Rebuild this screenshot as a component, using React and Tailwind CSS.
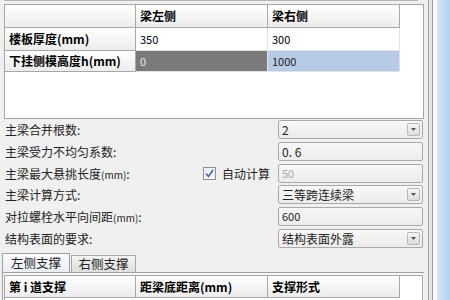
import React from 'react'

const font = { fontFamily: '"Noto Sans CJK SC", "DejaVu Sans", sans-serif' }

function HeadCell({ children, className = '' }) {
  return (
    <div
      className={`flex items-center px-[4px] font-bold text-[12px] text-black bg-gradient-to-b from-[#ffffff] to-[#ececec] border-r border-b border-[#a8a8a8] ${className}`}
    >
      {children}
    </div>
  )
}

function Cell({ children, className = '' }) {
  return (
    <div className={`flex items-center px-[4px] text-[11px] border-r border-b border-[#e2e2e2] ${className}`}>
      {children}
    </div>
  )
}

function Arrow() {
  return (
    <div className="w-[13px] h-[13px] mr-[2px] border border-[#b8b8b8] rounded-[2px] bg-gradient-to-b from-[#f6f6f6] to-[#dcdcdc] flex items-center justify-center">
      <svg width="5" height="3" viewBox="0 0 5 3">
        <path d="M0 0h5L2.5 3z" fill="#555" />
      </svg>
    </div>
  )
}

function Field({ value, combo, disabled, big }) {
  return (
    <div className="shrink-0 w-[145px] h-[19px] mr-[1px] border border-[#a9a9a9] rounded-[2px] bg-gradient-to-b from-[#f7f7f7] to-[#ececec] flex items-center justify-between">
      <span
        className={`pl-[3px] ${big ? 'text-[12px]' : 'text-[11px]'} ${disabled ? 'text-[#a8a8a8]' : 'text-[#222]'}`}
      >
        {value}
      </span>
      {combo && <Arrow />}
    </div>
  )
}

function Row({ label, children, className = '' }) {
  return (
    <div className={`shrink-0 flex items-center h-[19px] ${className}`}>
      <div className="flex-1 pl-[5px] text-[12px] text-[#222] whitespace-nowrap">{label}</div>
      {children}
    </div>
  )
}

const mm = <span className="text-[10px]">(mm)</span>

export default function App() {
  return (
    <div className="w-[450px] h-[300px] bg-[#f0f0f0] flex overflow-hidden" style={font}>
      <div className="w-[424px] flex flex-col">
        {/* top remnant */}
        <div className="shrink-0 h-[4px] flex">
          <div className="ml-[4px] w-[414px] h-[1px] bg-[#b5b5b5]" />
        </div>

        {/* upper grid */}
        <div className="shrink-0 ml-[4px] w-[420px] h-[115px] border border-[#a6a6a6] bg-white">
          <div className="grid grid-cols-[131px_132px_132px] grid-rows-[23px_23px_21px]">
            <HeadCell />
            <HeadCell>梁左侧</HeadCell>
            <HeadCell>梁右侧</HeadCell>
            <HeadCell>楼板厚度(mm)</HeadCell>
            <Cell>350</Cell>
            <Cell>300</Cell>
            <HeadCell>下挂侧模高度h(mm)</HeadCell>
            <Cell className="bg-[#7a7a7a] text-[#e8e8e8]">0</Cell>
            <Cell className="bg-[#b7cbe6] text-[#1a1a1a]">1000</Cell>
          </div>
        </div>

        {/* form */}
        <Row label="主梁合并根数:" className="mt-[1px]">
          <Field value="2" combo big />
        </Row>
        <Row label="主梁受力不均匀系数:" className="mt-[3px]">
          <Field value="0. 6" big />
        </Row>
        <Row label={<>主梁最大悬挑长度{mm}:</>} className="mt-[3px]">
          <div className="w-[13px] h-[13px] border border-[#8e8f8f] bg-gradient-to-b from-[#e9eef5] to-[#f8fbff] flex items-center justify-center">
            <svg width="9" height="9" viewBox="0 0 9 9">
              <path d="M1 4.5l2.5 3L8 1" stroke="#4a62a8" strokeWidth="1.6" fill="none" />
            </svg>
          </div>
          <span className="ml-[6px] w-[56px] text-[12px] text-[#222]">自动计算</span>
          <Field value="50" disabled />
        </Row>
        <Row label="主梁计算方式:" className="mt-[2px]">
          <Field value="三等跨连续梁" combo big />
        </Row>
        <Row label={<>对拉螺栓水平向间距{mm}:</>} className="mt-[3px]">
          <Field value="600" />
        </Row>
        <Row label="结构表面的要求:" className="mt-[3px]">
          <Field value="结构表面外露" combo big />
        </Row>

        {/* tabs */}
        <div className="shrink-0 mt-[5px] flex items-end h-[19px] pl-[2px]">
          <div className="w-[68px] h-[19px] border border-b-0 border-[#a0a0a0] bg-gradient-to-b from-[#fbfcfd] to-[#e9eef4] text-[12.5px] text-[#222] flex items-center justify-center">
            左侧支撑
          </div>
          <div className="w-[65px] h-[17px] ml-[1px] border border-b-0 border-[#a8a8a8] bg-gradient-to-b from-[#f4f4f4] to-[#dedede] text-[12.5px] text-[#222] flex items-center justify-center">
            右侧支撑
          </div>
        </div>
        <div className="ml-[2px] flex-1 border-t border-l border-[#a0a0a0] bg-[#f8f8f8] pt-[2px] pl-[1px]">
          <div className="w-[419px] h-[40px] border border-[#a6a6a6] bg-white">
            <div className="grid grid-cols-[131px_132px_132px] grid-rows-[22px]">
              <HeadCell>第 i 道支撑</HeadCell>
              <HeadCell>距梁底距离(mm)</HeadCell>
              <HeadCell>支撑形式</HeadCell>
            </div>
          </div>
        </div>
      </div>

      {/* window frame */}
      <div className="flex-1 flex">
        <div className="w-[4px] bg-[#f0f0f0]" />
        <div className="w-[1px] bg-[#a0a0a0]" />
        <div className="w-[3px] bg-[#e6e6e6]" />
        <div className="w-[1px] bg-[#9a9a9a]" />
        <div className="w-[4px] bg-[#f7f7f7]" />
        <div className="flex-1 bg-gradient-to-r from-[#d6e6f8] to-[#b4cfee]" />
      </div>
    </div>
  )
}
